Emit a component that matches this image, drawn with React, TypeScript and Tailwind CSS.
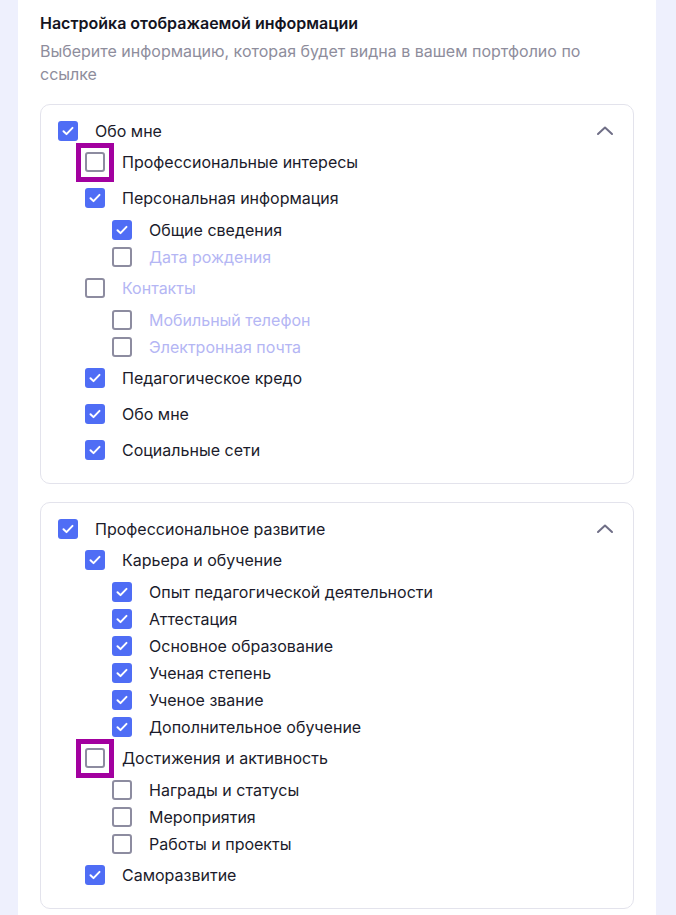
import React from 'react'

type Item = {
  label: string
  level: number
  checked: boolean
  disabled?: boolean
  marked?: boolean
}

const aboutMe: Item[] = [
  { label: 'Профессиональные интересы', level: 1, checked: false, marked: true },
  { label: 'Персональная информация', level: 1, checked: true },
  { label: 'Общие сведения', level: 2, checked: true },
  { label: 'Дата рождения', level: 2, checked: false, disabled: true },
  { label: 'Контакты', level: 1, checked: false, disabled: true },
  { label: 'Мобильный телефон', level: 2, checked: false, disabled: true },
  { label: 'Электронная почта', level: 2, checked: false, disabled: true },
  { label: 'Педагогическое кредо', level: 1, checked: true },
  { label: 'Обо мне', level: 1, checked: true },
  { label: 'Социальные сети', level: 1, checked: true },
]

const development: Item[] = [
  { label: 'Карьера и обучение', level: 1, checked: true },
  { label: 'Опыт педагогической деятельности', level: 2, checked: true },
  { label: 'Аттестация', level: 2, checked: true },
  { label: 'Основное образование', level: 2, checked: true },
  { label: 'Ученая степень', level: 2, checked: true },
  { label: 'Ученое звание', level: 2, checked: true },
  { label: 'Дополнительное обучение', level: 2, checked: true },
  { label: 'Достижения и активность', level: 1, checked: false, marked: true },
  { label: 'Награды и статусы', level: 2, checked: false },
  { label: 'Мероприятия', level: 2, checked: false },
  { label: 'Работы и проекты', level: 2, checked: false },
  { label: 'Саморазвитие', level: 1, checked: true },
]

function Checkbox({ checked, marked }: { checked: boolean; marked?: boolean }) {
  return (
    <span className="relative flex h-5 w-5 shrink-0 items-center justify-center">
      {checked ? (
        <span className="flex h-5 w-5 items-center justify-center rounded-[3px] bg-[#4f6df5]">
          <svg width="14" height="14" viewBox="0 0 14 14" fill="none">
            <path d="M2.5 7.2l3 2.9 6-6.2" stroke="white" strokeWidth="2" strokeLinecap="round" strokeLinejoin="round" />
          </svg>
        </span>
      ) : (
        <span className="h-5 w-5 rounded-[3px] border-2 border-[#8d8ca0] bg-white" />
      )}
      {marked && (
        <span className="absolute -left-[9px] -top-[9px] h-[39px] w-[38px] border-[5px] border-[#a2009f]" />
      )}
    </span>
  )
}

function Row({ item }: { item: Item }) {
  return (
    <div
      className={`flex items-center gap-[17px] ${item.level === 2 ? 'h-[27px] pl-[54px]' : 'h-9 pl-[27px]'}`}
    >
      <Checkbox checked={item.checked} marked={item.marked} />
      <span className={`text-base ${item.disabled ? 'text-[#b4b6f4]' : 'text-[#1b1b2b]'}`}>{item.label}</span>
    </div>
  )
}

function Section({ title, items }: { title: string; items: Item[] }) {
  return (
    <div className="rounded-[10px] border border-[#e3e3ec] bg-white pb-[15px] pl-[17px] pr-4 pt-[13px]">
      <div className="flex h-[26px] items-center justify-between">
        <div className="flex items-center gap-[17px]">
          <Checkbox checked />
          <span className="text-base text-[#1b1b2b]">{title}</span>
        </div>
        <svg width="24" height="24" viewBox="0 0 24 24" fill="none">
          <path d="M5 15l7-6.5 7 6.5" stroke="#6f6e86" strokeWidth="2" strokeLinecap="round" strokeLinejoin="round" />
        </svg>
      </div>
      {items.map((it) => (
        <Row key={it.label} item={it} />
      ))}
    </div>
  )
}

export default function App() {
  return (
    <div className="min-h-screen bg-[#eef0fd]" style={{ fontFamily: 'Inter, "Noto Sans", sans-serif' }}>
      <div className="ml-[18px] w-[638px] bg-white px-[22px] pt-[12px] pb-2">
        <h2 className="text-base font-semibold leading-[22px] text-[#14141f]">Настройка отображаемой информации</h2>
        <p className="mt-[6px] text-base leading-[23px] text-[#8e8d9c]">
          Выберите информацию, которая будет видна в вашем портфолио по ссылке
        </p>
        <div className="mt-[18px] flex flex-col gap-[18px]">
          <Section title="Обо мне" items={aboutMe} />
          <Section title="Профессиональное развитие" items={development} />
        </div>
      </div>
    </div>
  )
}
